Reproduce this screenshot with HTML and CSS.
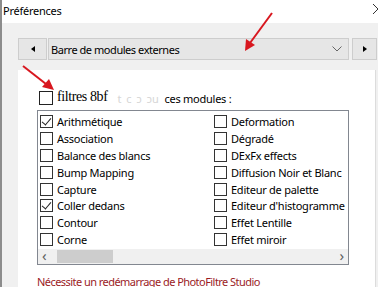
FILE: index.html
```html
<!DOCTYPE html>
<html lang="fr">
<head>
    <meta charset="UTF-8">
    <title>Préférences</title>
    <link rel="stylesheet" href="styles.css">
</head>
<body>
    <div class="window">
        <div class="titlebar">
            <span class="title">Préférences</span>
            <svg class="close" width="10" height="10" viewBox="0 0 10 10"><path d="M0 0 L10 10 M10 0 L0 10" stroke="#333" stroke-width="1"/></svg>
        </div>

        <div class="content">
            <div class="toolbar">
                <button class="nav-btn"><span class="tri-left"></span></button>
                <div class="combo">
                    <span>Barre de modules externes</span>
                    <svg width="10" height="6" viewBox="0 0 10 6"><path d="M0.5 0.5 L5 5 L9.5 0.5" fill="none" stroke="#666" stroke-width="1"/></svg>
                </div>
                <button class="nav-btn"><span class="tri-right"></span></button>
            </div>

            <div class="panel">
                <div class="panel-head">
                    <span class="head-box"></span>
                    <span class="overlay-text">filtres 8bf</span>
                    <span class="faded">t  c  ɔ  ɔu</span>
                    <span>ces modules :</span>
                </div>

                <div class="listbox">
                    <ul class="modules">
                        <li><span class="box checked"></span>Arithmétique</li>
                        <li><span class="box"></span>Association</li>
                        <li><span class="box"></span>Balance des blancs</li>
                        <li><span class="box"></span>Bump Mapping</li>
                        <li><span class="box"></span>Capture</li>
                        <li><span class="box checked"></span>Coller dedans</li>
                        <li><span class="box"></span>Contour</li>
                        <li><span class="box"></span>Corne</li>
                        <li><span class="box"></span>Deformation</li>
                        <li><span class="box"></span>Dégradé</li>
                        <li><span class="box"></span>DExFx effects</li>
                        <li><span class="box"></span>Diffusion Noir et Blanc</li>
                        <li><span class="box"></span>Editeur de palette</li>
                        <li><span class="box"></span>Editeur d'histogramme</li>
                        <li><span class="box"></span>Effet Lentille</li>
                        <li><span class="box"></span>Effet miroir</li>
                    </ul>
                    <div class="hscroll">
                        <span class="arrow">&lsaquo;</span>
                        <span class="thumb"></span>
                        <span class="arrow right">&rsaquo;</span>
                    </div>
                </div>

                <p class="warning">Nécessite un redémarrage de PhotoFiltre Studio</p>
            </div>
        </div>

        <!-- annotation arrows drawn over the screenshot -->
        <svg class="marks" width="378" height="287" viewBox="0 0 378 287">
            <line x1="272" y1="13" x2="250" y2="43" stroke="#d8171f" stroke-width="2"/>
            <path d="M245 51 L246 39 L255 45 Z" fill="#d8171f"/>
            <line x1="23" y1="66" x2="46" y2="84" stroke="#d8171f" stroke-width="2"/>
            <path d="M54 90 L42 87 L49 79 Z" fill="#d8171f"/>
        </svg>
    </div>
</body>
</html>
```

FILE: styles.css
```css
* {
    box-sizing: border-box;
    margin: 0;
}

body {
    background: #fff;
    font-family: "Noto Sans", "Open Sans", sans-serif;
    font-size: 11px;
    letter-spacing: -0.25px;
    color: #000;
    overflow: hidden;
}

.window {
    position: relative;
    width: 378px;
    height: 287px;
    border-left: 2px solid #8c8c8c;
    overflow: hidden;
}

.titlebar {
    height: 23px;
    display: flex;
    align-items: center;
    justify-content: space-between;
    padding-left: 1px;
}

.title {
    margin-top: -3px;
}

.close {
    margin-right: -5px;
    margin-top: -6px;
}

.content {
    background: #f0f0f0;
    height: 264px;
    padding: 15px 0 0 16px;
}

.toolbar {
    display: flex;
    gap: 1px;
    height: 22px;
}

.nav-btn {
    width: 29px;
    height: 22px;
    background: #e6e6e6;
    border: 1px solid #cdcdcd;
    display: flex;
    align-items: center;
    justify-content: center;
    padding: 0;
}

.toolbar .nav-btn:last-child {
    width: 25px;
    margin-left: 2px;
}

.tri-left {
    border-top: 3px solid transparent;
    border-bottom: 3px solid transparent;
    border-right: 4px solid #000;
}

.tri-right {
    border-top: 3px solid transparent;
    border-bottom: 3px solid transparent;
    border-left: 4px solid #000;
}

.combo {
    width: 301px;
    background: #e6e6e6;
    border: 1px solid #cdcdcd;
    display: flex;
    align-items: center;
    justify-content: space-between;
    padding: 0 6px 0 2px;
    letter-spacing: -0.45px;
}

.panel {
    background: #fff;
    margin-top: 10px;
    width: 358px;
    height: 218px;
    border-right: 1px solid #dcdcdc;
    padding: 20px 0 0 19px;
}

.panel-head {
    display: flex;
    align-items: center;
    height: 16px;
    white-space: pre;
}

.head-box {
    width: 14px;
    height: 14px;
    border: 1.5px solid #222;
    margin: 0 4px 0 2px;
}

.overlay-text {
    font-family: "Liberation Serif", serif;
    font-size: 14px;
    letter-spacing: -0.4px;
    margin-top: -2px;
}

.faded {
    color: #d6d6d6;
    padding: 0 6px 0 10px;
}

.listbox {
    width: 312px;
    height: 155px;
    margin-top: 4px;
    border: 1px solid #828790;
    display: flex;
    flex-direction: column;
    justify-content: space-between;
}

.modules {
    list-style: none;
    padding: 2px 0 0 2px;
    display: grid;
    grid-template-columns: 174px 1fr;
    grid-template-rows: repeat(8, 16.9px);
    grid-auto-flow: column;
}

.modules li {
    display: flex;
    align-items: center;
    white-space: nowrap;
}

.box {
    width: 13px;
    height: 13px;
    border: 1px solid #333;
    margin-right: 4px;
    flex: none;
    position: relative;
}

.box.checked::after {
    content: "";
    position: absolute;
    left: 3px;
    top: 0px;
    width: 4px;
    height: 8px;
    border-right: 1px solid #222;
    border-bottom: 1px solid #222;
    transform: rotate(40deg);
}

.hscroll {
    height: 15px;
    background: #f0f0f0;
    display: flex;
    align-items: center;
    padding: 0 4px;
}

.arrow {
    font-size: 15px;
    color: #606060;
    width: 15px;
    line-height: 15px;
    margin-top: -2px;
}

.arrow.right {
    margin-left: auto;
    text-align: right;
}

.thumb {
    width: 56px;
    height: 13px;
    background: #cdcdcd;
}

.warning {
    color: #9b1c1f;
    letter-spacing: -0.55px;
    margin-top: 9px;
}

.marks {
    position: absolute;
    left: -2px;
    top: 0;
    pointer-events: none;
}
```
